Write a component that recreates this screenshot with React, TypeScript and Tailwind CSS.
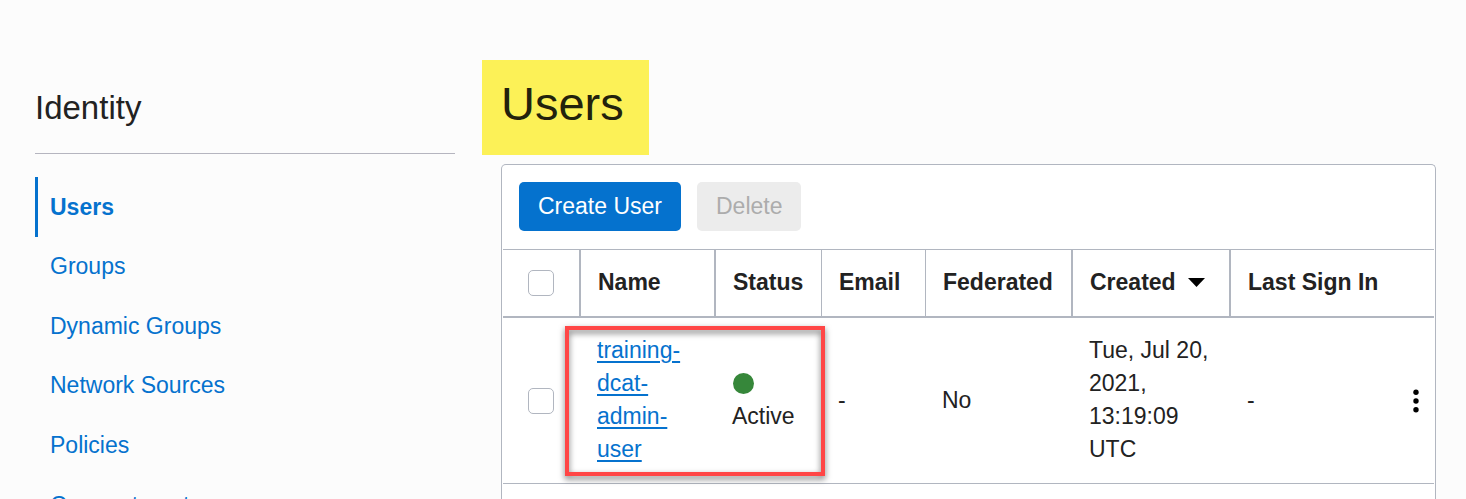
const navItems = [
  { label: 'Users', active: true },
  { label: 'Groups', active: false },
  { label: 'Dynamic Groups', active: false },
  { label: 'Network Sources', active: false },
  { label: 'Policies', active: false },
  { label: 'Compartments', active: false },
];

const headCell =
  'h-[69px] border-t border-b-2 border-[#b1b6c0] pl-[17px] pr-3 pb-0.5 text-left align-middle font-bold whitespace-nowrap';
const bodyCell = 'border-b border-[#b1b6c0] px-4 pt-4 pb-[17px] align-middle';

function Checkbox({ label }: { label: string }) {
  return (
    <input
      type="checkbox"
      aria-label={label}
      className="block size-[26px] appearance-none rounded-[5px] border border-[#b1b6c0] bg-white checked:bg-[#0572ce]"
    />
  );
}

function Sidebar() {
  return (
    <aside className="w-[420px] shrink-0 pt-[91px]">
      <h2 className="border-b border-[#b5b5bf] pb-[29px] text-[33px] leading-[33px]">Identity</h2>
      <nav className="mt-[23px] grid h-[358px] auto-rows-fr" aria-label="Identity">
        {navItems.map((item) => (
          <a
            key={item.label}
            href="#"
            aria-current={item.active ? 'page' : undefined}
            className={
              item.active
                ? 'flex items-center border-l-[3px] border-[#0572ce] pt-px pl-3 font-bold text-[#0572ce]'
                : 'flex items-center border-l-[3px] border-transparent pl-3 text-[#0572ce]'
            }
          >
            {item.label}
          </a>
        ))}
      </nav>
    </aside>
  );
}

function UsersTable() {
  return (
    <div className="relative">
      <table className="w-full table-fixed border-separate border-spacing-0">
        <colgroup>
          <col className="w-[78px]" />
          <col className="w-[135px]" />
          <col className="w-[106px]" />
          <col className="w-[104px]" />
          <col className="w-[147px]" />
          <col className="w-[158px]" />
          <col />
          <col className="w-9" />
        </colgroup>
        <thead>
          <tr>
            <th className="h-[69px] border-t border-r-2 border-b-2 border-[#b1b6c0] pl-[25px] align-middle">
              <Checkbox label="Select all users" />
            </th>
            <th className={`${headCell} border-r-2`}>Name</th>
            <th className={`${headCell} border-r`}>Status</th>
            <th className={`${headCell} border-r`}>Email</th>
            <th className={`${headCell} border-r-2`}>Federated</th>
            <th className={`${headCell} border-r-2`}>
              <button type="button" className="flex items-center gap-3 font-bold">
                Created
                <svg width="17" height="9" viewBox="0 0 17 9" aria-hidden="true">
                  <path d="M0 0h17L8.5 9z" fill="#000" />
                </svg>
              </button>
            </th>
            <th className={headCell}>Last Sign In</th>
            <th className="border-t border-b-2 border-[#b1b6c0]" aria-label="Actions" />
          </tr>
        </thead>
        <tbody>
          <tr>
            <td className="border-b border-[#b1b6c0] pl-[25px] align-middle">
              <Checkbox label="Select training-dcat-admin-user" />
            </td>
            <td className={bodyCell}>
              <a href="#" className="text-[#0572ce] underline decoration-2 underline-offset-3">
                training-dcat-admin-user
              </a>
            </td>
            <td className={bodyCell}>
              <div className="flex h-[33px] items-center pl-px">
                <span className="size-[21px] rounded-full bg-[#36873a]" />
              </div>
              Active
            </td>
            <td className={bodyCell}>-</td>
            <td className={bodyCell}>No</td>
            <td className={bodyCell}>Tue, Jul 20, 2021, 13:19:09 UTC</td>
            <td className={bodyCell}>-</td>
            <td className="border-b border-[#b1b6c0] align-middle">
              <button type="button" aria-label="Row actions" className="flex h-9 w-9 items-center justify-center">
                <svg width="6" height="24" viewBox="0 0 6 24" fill="#000" aria-hidden="true">
                  <circle cx="3" cy="3.3" r="2.7" />
                  <circle cx="3" cy="12" r="2.7" />
                  <circle cx="3" cy="20.7" r="2.7" />
                </svg>
              </button>
            </td>
          </tr>
        </tbody>
      </table>
      <div className="pointer-events-none absolute top-[77px] left-[62px] h-[150px] w-[260px] border-4 border-[#ff4646] drop-shadow-[0_3px_3px_rgba(0,0,0,0.55)]" />
    </div>
  );
}

export default function App() {
  return (
    <div className="flex h-screen overflow-hidden bg-[#fcfcfc] pr-[30px] pl-[35px] font-['Liberation_Sans',Arial,sans-serif] text-[23px] leading-[33px] text-[#222]">
      <Sidebar />
      <main className="ml-[27px] flex min-w-0 flex-1 flex-col pt-[60px]">
        <h1 className="self-start bg-[#fcf157] pt-4 pr-[25px] pb-6 pl-[19px] text-[47px] leading-[55px] text-[#22220c]">
          Users
        </h1>
        <section className="mt-[9px] ml-[19px] flex-1 rounded-t-[5px] border border-b-0 border-[#b1b6c0] bg-white px-px">
          <div className="flex gap-4 px-4 pt-[17px] pb-[18px]">
            <button type="button" className="rounded-[5px] bg-[#0572ce] px-[19px] py-2 text-white">
              Create User
            </button>
            <button type="button" disabled className="rounded-[5px] bg-[#ececec] px-[19px] py-2 text-[#acacac]">
              Delete
            </button>
          </div>
          <UsersTable />
        </section>
      </main>
    </div>
  );
}
